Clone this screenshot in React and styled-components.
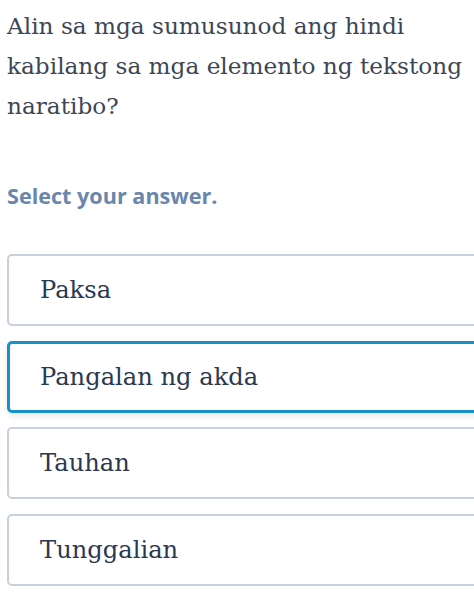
import React from "react";
import styled, { createGlobalStyle } from "styled-components";

const Global = createGlobalStyle`
  html, body { margin: 0; padding: 0; background: #ffffff; }
  body { overflow: hidden; width: 474px; height: 596px; }
`;

const Page = styled.div`
  padding: 6px 0 0 7px;
  width: 474px;
  box-sizing: border-box;
`;

const Question = styled.p`
  margin: 0;
  font-family: "DejaVu Serif", serif;
  font-size: 23.2px;
  line-height: 40px;
  color: #3d4654;
  padding-right: 4px;
`;

const Prompt = styled.h2`
  margin: 55px 0 0 0;
  font-family: "Open Sans", sans-serif;
  font-weight: 700;
  font-size: 21.6px;
  line-height: 30px;
  color: #6a86ad;
`;

const Options = styled.div`
  display: flex;
  flex-direction: column;
  gap: 14.5px;
  margin-top: 43px;
  width: 490px;
`;

const Option = styled.div`
  display: flex;
  align-items: center;
  height: 72px;
  box-sizing: border-box;
  padding-left: ${(p) => (p.$selected ? "30px" : "31px")};
  border: ${(p) => (p.$selected ? "3px solid #1a90c9" : "2px solid #c7d0dc")};
  border-radius: 5px;
  background: #ffffff;
  box-shadow: ${(p) => (p.$selected ? "0 3px 7px rgba(0,0,0,0.09)" : "none")};
  font-family: "DejaVu Serif", serif;
  font-size: 24.2px;
  color: #2a3850;
`;

const options = ["Paksa", "Pangalan ng akda", "Tauhan", "Tunggalian"];

export default function App() {
  return (
    <>
      <Global />
      <Page>
        <Question>
          Alin sa mga sumusunod ang hindi kabilang sa mga elemento ng tekstong
          naratibo?
        </Question>
        <Prompt>Select your answer.</Prompt>
        <Options>
          {options.map((o, i) => (
            <Option key={o} $selected={i === 1}>
              {o}
            </Option>
          ))}
        </Options>
      </Page>
    </>
  );
}
